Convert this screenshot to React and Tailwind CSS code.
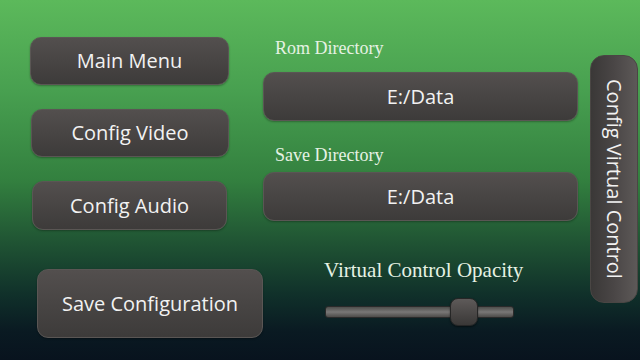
import React from 'react';

const btn =
  'flex items-center justify-center rounded-[11px] border border-[#5a5654] bg-gradient-to-b from-[#534f4e] to-[#3d3b3a] text-[#f2f2f2] shadow-[0_1px_2px_rgba(0,0,0,0.3)]';
const sans = { fontFamily: '"Open Sans", "DejaVu Sans", sans-serif' };
const serif = { fontFamily: '"Liberation Serif", "DejaVu Serif", serif' };

function MenuButton({ label, className }) {
  return (
    <button className={`${btn} ${className}`} style={sans}>
      {label}
    </button>
  );
}

export default function App() {
  return (
    <div className="w-[640px] h-[360px] overflow-hidden bg-[linear-gradient(180deg,#5cb95b_0%,#48a050_25%,#33803f_50%,#1f5233_68%,#10302a_82%,#0a1a22_92%,#08131e_100%)] flex">
      {/* left column */}
      <div className="w-[263px] flex flex-col pt-[37px]">
        <MenuButton label="Main Menu" className="ml-[30px] w-[199px] h-[48px] text-[20px]" />
        <MenuButton label="Config Video" className="ml-[31px] mt-[24px] w-[198px] h-[48px] text-[20px]" />
        <MenuButton label="Config Audio" className="ml-[32px] mt-[24px] w-[195px] h-[49px] text-[20px]" />
        <MenuButton label="Save Configuration" className="ml-[37px] mt-[39px] w-[226px] h-[69px] text-[20px]" />
      </div>

      {/* middle column */}
      <div className="w-[315px] flex flex-col pt-[37px]">
        <div className="pl-[12px] h-[22px] text-[18px] leading-[22px] text-[#e6f2e4]" style={serif}>
          Rom Directory
        </div>
        <div className={`${btn} mt-[13px] h-[49px] text-[20px]`} style={sans}>
          E:/Data
        </div>
        <div className="pl-[12px] mt-[23px] h-[22px] text-[18px] leading-[22px] text-[#e6f2e4]" style={serif}>
          Save Directory
        </div>
        <div className={`${btn} mt-[6px] h-[49px] text-[20px]`} style={sans}>
          E:/Data
        </div>
        <div className="mt-[36px] pl-[61px] h-[26px] text-[21px] leading-[26px] text-[#e6f2e4]" style={serif}>
          Virtual Control Opacity
        </div>
        <div className="mt-[15px] ml-[62px] w-[189px] h-[28px] relative flex items-center">
          <div className="w-full h-[12px] rounded-[3px] border border-[#2a2a2a] bg-gradient-to-b from-[#4e4e4c] via-[#7a7877] to-[#4e4c4a]" />
          <div className="absolute left-[125px] top-0 w-[28px] h-[28px] rounded-[8px] border border-[#262626] bg-gradient-to-b from-[#5e5a59] to-[#3a3837] shadow-[0_1px_2px_rgba(0,0,0,0.5)]" />
        </div>
      </div>

      {/* right vertical button */}
      <div className="flex-1 pt-[55px] pl-[12px]">
        <button
          className="w-[48px] h-[248px] flex items-center justify-center rounded-[14px] border border-[#4a4644] bg-gradient-to-r from-[#3a3837] via-[#4a4646] to-[#5d5958] text-[#f2f2f2] text-[20px] [writing-mode:vertical-rl]"
          style={sans}
        >
          Config Virtual Control
        </button>
      </div>
    </div>
  );
}
